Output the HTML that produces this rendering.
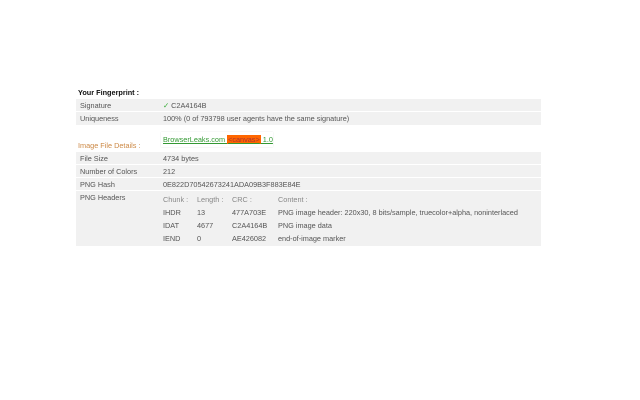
<!DOCTYPE html>
<html><head><style>
body{margin:0;width:640px;height:400px;background:#fff;font-family:"Liberation Sans",sans-serif;font-size:7.3px;color:#555;position:relative}
.a{position:absolute}
.row{position:absolute;left:76px;width:465px;background:#f1f1f1}
.l{position:absolute;left:4px}
.v{position:absolute;left:87px}
</style></head><body>
<div class="a" style="left:78px;top:88px;font-weight:bold;color:#111">Your Fingerprint :</div>
<div class="row" style="top:99px;height:12px"><span class="l" style="top:2px">Signature</span><span class="v" style="top:2px"><span style="color:#3a3">✓</span> C2A4164B</span></div>
<div class="row" style="top:112px;height:13px"><span class="l" style="top:2px">Uniqueness</span><span class="v" style="top:2px">100% (0 of 793798 user agents have the same signature)</span></div>
<div class="a" style="left:78px;top:141px;color:#c84">Image File Details :</div>
<div class="a" style="left:161px;top:132px;width:112px;height:15px;background:#fff;box-shadow:0 0 1px #ddd"></div>
<div class="a" style="left:163px;top:135px;color:#393;text-decoration:underline">BrowserLeaks.com <span style="background:#f60;color:#a33;padding:0 1px">&lt;canvas&gt;</span> 1.0</div>
<div class="row" style="top:152px;height:12px"><span class="l" style="top:2px">File Size</span><span class="v" style="top:2px">4734 bytes</span></div>
<div class="row" style="top:165px;height:12px"><span class="l" style="top:2px">Number of Colors</span><span class="v" style="top:2px">212</span></div>
<div class="row" style="top:178px;height:12px"><span class="l" style="top:2px">PNG Hash</span><span class="v" style="top:2px">0E822D70542673241ADA09B3F883E84E</span></div>
<div class="row" style="top:191px;height:55px"><span class="l" style="top:2px">PNG Headers</span></div>
<div class="a" style="left:161px;top:193px;width:380px">
<div style="position:relative;height:13px;color:#888"><span class="a" style="left:2px;top:2px">Chunk :</span><span class="a" style="left:36px;top:2px">Length :</span><span class="a" style="left:71px;top:2px">CRC :</span><span class="a" style="left:117px;top:2px">Content :</span></div>
<div style="position:relative;height:13px"><span class="a" style="left:2px;top:2px">IHDR</span><span class="a" style="left:36px;top:2px">13</span><span class="a" style="left:71px;top:2px">477A703E</span><span class="a" style="left:117px;top:2px">PNG image header: 220x30, 8 bits/sample, truecolor+alpha, noninterlaced</span></div>
<div style="position:relative;height:13px"><span class="a" style="left:2px;top:2px">IDAT</span><span class="a" style="left:36px;top:2px">4677</span><span class="a" style="left:71px;top:2px">C2A4164B</span><span class="a" style="left:117px;top:2px">PNG image data</span></div>
<div style="position:relative;height:13px"><span class="a" style="left:2px;top:2px">IEND</span><span class="a" style="left:36px;top:2px">0</span><span class="a" style="left:71px;top:2px">AE426082</span><span class="a" style="left:117px;top:2px">end-of-image marker</span></div>
</div>
</body></html>
